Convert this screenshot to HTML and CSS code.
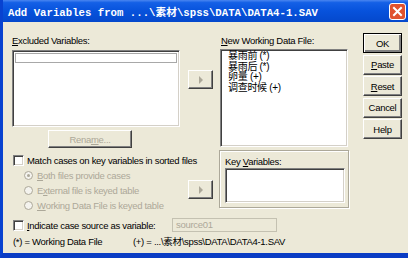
FILE: index.html
```html
<!DOCTYPE html>
<html lang="en">
<head>
    <meta charset="UTF-8">
    <title>Add Variables</title>
    <link rel="stylesheet" href="styles.css">
</head>
<body>
    <div class="window">
        <div class="titlebar">
            <span class="title">Add Variables from ...\素材\spss\DATA\DATA4-1.SAV</span>
            <span class="close">
                <svg width="17" height="17" viewBox="0 0 17 17">
                    <rect x="0.5" y="0.5" width="16" height="16" rx="2.5" fill="#e0522e" stroke="#ffffff" stroke-width="1"/>
                    <path d="M5 5 L12 12 M12 5 L5 12" stroke="#ffffff" stroke-width="2" stroke-linecap="square"/>
                </svg>
            </span>
        </div>
        <div class="body">
            <div class="top">
                <div class="col-left">
                    <div class="label"><u>E</u>xcluded Variables:</div>
                    <div class="listbox excluded"><div class="focus-row"></div></div>
                    <div class="button rename disabled">Rena<u>m</u>e...</div>
                </div>
                <div class="col-arrow arrow-top">
                    <div class="button arrow">
                        <svg width="5" height="8" viewBox="0 0 5 8"><path d="M1 0 L5 4 L1 8 Z" fill="#aca899"/></svg>
                    </div>
                </div>
                <div class="col-mid">
                    <div class="label working-label"><u>N</u>ew Working Data File:</div>
                    <div class="listbox working">
                        <div class="item">暴雨前 (*)</div>
                        <div class="item">暴雨后 (*)</div>
                        <div class="item">卵量 (+)</div>
                        <div class="item">调查时候 (+)</div>
                    </div>
                </div>
                <div class="col-buttons">
                    <div class="button default">OK</div>
                    <div class="button"><u>P</u>aste</div>
                    <div class="button"><u>R</u>eset</div>
                    <div class="button">Cancel</div>
                    <div class="button">Help</div>
                </div>
            </div>

            <div class="lower">
                <div class="col-left">
                    <div class="check-row"><span class="checkbox"></span>Match cases on key variables in sorted files</div>
                    <div class="radio-row disabled"><span class="radio on"></span><u>B</u>oth files provide cases</div>
                    <div class="radio-row disabled"><span class="radio"></span>E<u>x</u>ternal file is keyed table</div>
                    <div class="radio-row disabled"><span class="radio"></span><u>W</u>orking Data File is keyed table</div>
                </div>
                <div class="col-arrow arrow-lower">
                    <div class="button arrow">
                        <svg width="5" height="8" viewBox="0 0 5 8"><path d="M1 0 L5 4 L1 8 Z" fill="#aca899"/></svg>
                    </div>
                </div>
                <div class="col-mid">
                    <div class="group">
                        <div class="label">Key <u>V</u>ariables:</div>
                        <div class="listbox key"></div>
                    </div>
                </div>
            </div>

            <div class="source-row">
                <span class="checkbox"></span>
                <span class="source-label"><u>I</u>ndicate case source as variable:</span>
                <span class="textbox">source01</span>
            </div>

            <div class="footer">
                <span class="legend-working">(*) = Working Data File</span>
                <span>(+) = ...\素材\spss\DATA\DATA4-1.SAV</span>
            </div>
        </div>
    </div>
</body>
</html>
```

FILE: styles.css
```css
* {
    box-sizing: border-box;
}
body {
    margin: 0;
    font-family: "Liberation Sans", "Noto Sans CJK SC", sans-serif;
    font-size: 9.5px;
    letter-spacing: -0.3px;
    color: #000;
}
u {
    text-decoration: underline;
    text-underline-offset: 1px;
}
.window {
    width: 408px;
    height: 258px;
    background-color: #ece9d8;
    border-left: 3px solid #0842d0;
    border-bottom: 5px solid #0a3cc4;
    position: relative;
    overflow: hidden;
}
.titlebar {
    height: 22px;
    margin-left: -3px;
    padding-left: 8px;
    display: flex;
    align-items: center;
    justify-content: space-between;
    background: linear-gradient(#4a86f0 0%, #1460e6 12%, #0752dc 50%, #0448cc 100%);
}
.title {
    font-family: "Liberation Mono", "Noto Sans CJK SC", monospace;
    font-weight: bold;
    font-size: 10.7px;
    letter-spacing: 0;
    color: #fff;
    padding-top: 1px;
}
.close {
    display: flex;
    margin-right: 2px;
    margin-top: 1px;
}
.body {
    padding-left: 9px;
}

/* top block */
.top {
    display: flex;
    height: 126px;
}
.col-left {
    width: 168px;
}
.top .col-left {
    padding-top: 13px;
}
.label {
    height: 12px;
    line-height: 12px;
    white-space: nowrap;
}
.listbox {
    background-color: #fff;
    border: 1px solid;
    border-color: #808080 #fff #fff #808080;
    box-shadow: inset 1px 1px #404040, inset -1px -1px #d4d0c8;
}
.excluded {
    margin-top: 3px;
    height: 77px;
    padding: 2px;
}
.focus-row {
    height: 10px;
    border: 1px solid #a8a8a8;
}
.button {
    height: 20px;
    display: flex;
    align-items: center;
    justify-content: center;
    background-color: #ece9d8;
    border: 1px solid;
    border-color: #fff #404040 #404040 #fff;
    box-shadow: inset -1px -1px #808080;
    white-space: nowrap;
}
.button.default {
    border: 1px solid #000;
    box-shadow: inset 1px 1px #fff, inset -2px -2px #808080;
}
.disabled {
    color: #aca899;
}
.rename {
    margin-top: 3px;
    margin-left: 36px;
    width: 84px;
    height: 18px;
}
.col-arrow {
    width: 25px;
    margin-left: 8px;
}
.arrow-top {
    padding-top: 48px;
}
.arrow-lower {
    padding-top: 32px;
}
.arrow {
    height: 19px;
}
.col-mid {
    width: 131px;
    margin-left: 6px;
}
.top .col-mid {
    padding-top: 13px;
}
.working-label {
    padding-left: 2px;
}
.working {
    margin-top: 2px;
    margin-left: 1px;
    width: 128px;
    height: 98px;
    padding: 1px 0 0 7px;
}
.item {
    height: 10.7px;
    line-height: 10.7px;
    font-size: 10px;
    white-space: nowrap;
}
.col-buttons {
    width: 39px;
    margin-left: 13px;
    padding-top: 11px;
    display: flex;
    flex-direction: column;
    gap: 1.5px;
}

/* lower block */
.lower {
    display: flex;
    height: 64px;
}
.lower .col-left {
    padding-top: 6px;
}
.check-row,
.radio-row {
    height: 12px;
    display: flex;
    align-items: center;
    white-space: nowrap;
}
.radio-row {
    margin-top: 3px;
    padding-left: 12px;
}
.checkbox {
    width: 11px;
    height: 11px;
    margin-left: 1px;
    margin-right: 3px;
    background-color: #fff;
    border: 1px solid;
    border-color: #808080 #fff #fff #808080;
    box-shadow: inset 1px 1px #404040, inset -1px -1px #d4d0c8;
    flex-shrink: 0;
}
.radio {
    width: 9px;
    height: 9px;
    margin-right: 4px;
    border-radius: 50%;
    border: 1px solid #aca899;
    background-color: #f4f3ee;
    position: relative;
}
.radio.on::after {
    content: "";
    position: absolute;
    left: 2px;
    top: 2px;
    width: 3px;
    height: 3px;
    border-radius: 50%;
    background-color: #aca899;
}
.group {
    margin-top: 2px;
    width: 130px;
    height: 58px;
    border: 1px solid #aca899;
    box-shadow: inset 1px 1px #fff, 1px 1px #fff;
    padding: 5px 0 0 5px;
}
.key {
    width: 120px;
    height: 35px;
}

/* bottom rows */
.source-row {
    margin-top: 6px;
    height: 14px;
    display: flex;
    align-items: center;
    white-space: nowrap;
}
.source-label {
    width: 145px;
}
.textbox {
    width: 105px;
    height: 14px;
    line-height: 12px;
    padding-left: 3px;
    border: 1px solid #c4c1b1;
    color: #aca899;
}
.footer {
    margin-top: 4px;
    height: 12px;
    line-height: 12px;
    display: flex;
    white-space: nowrap;
}
.legend-working {
    width: 121px;
    padding-left: 1px;
}
```
